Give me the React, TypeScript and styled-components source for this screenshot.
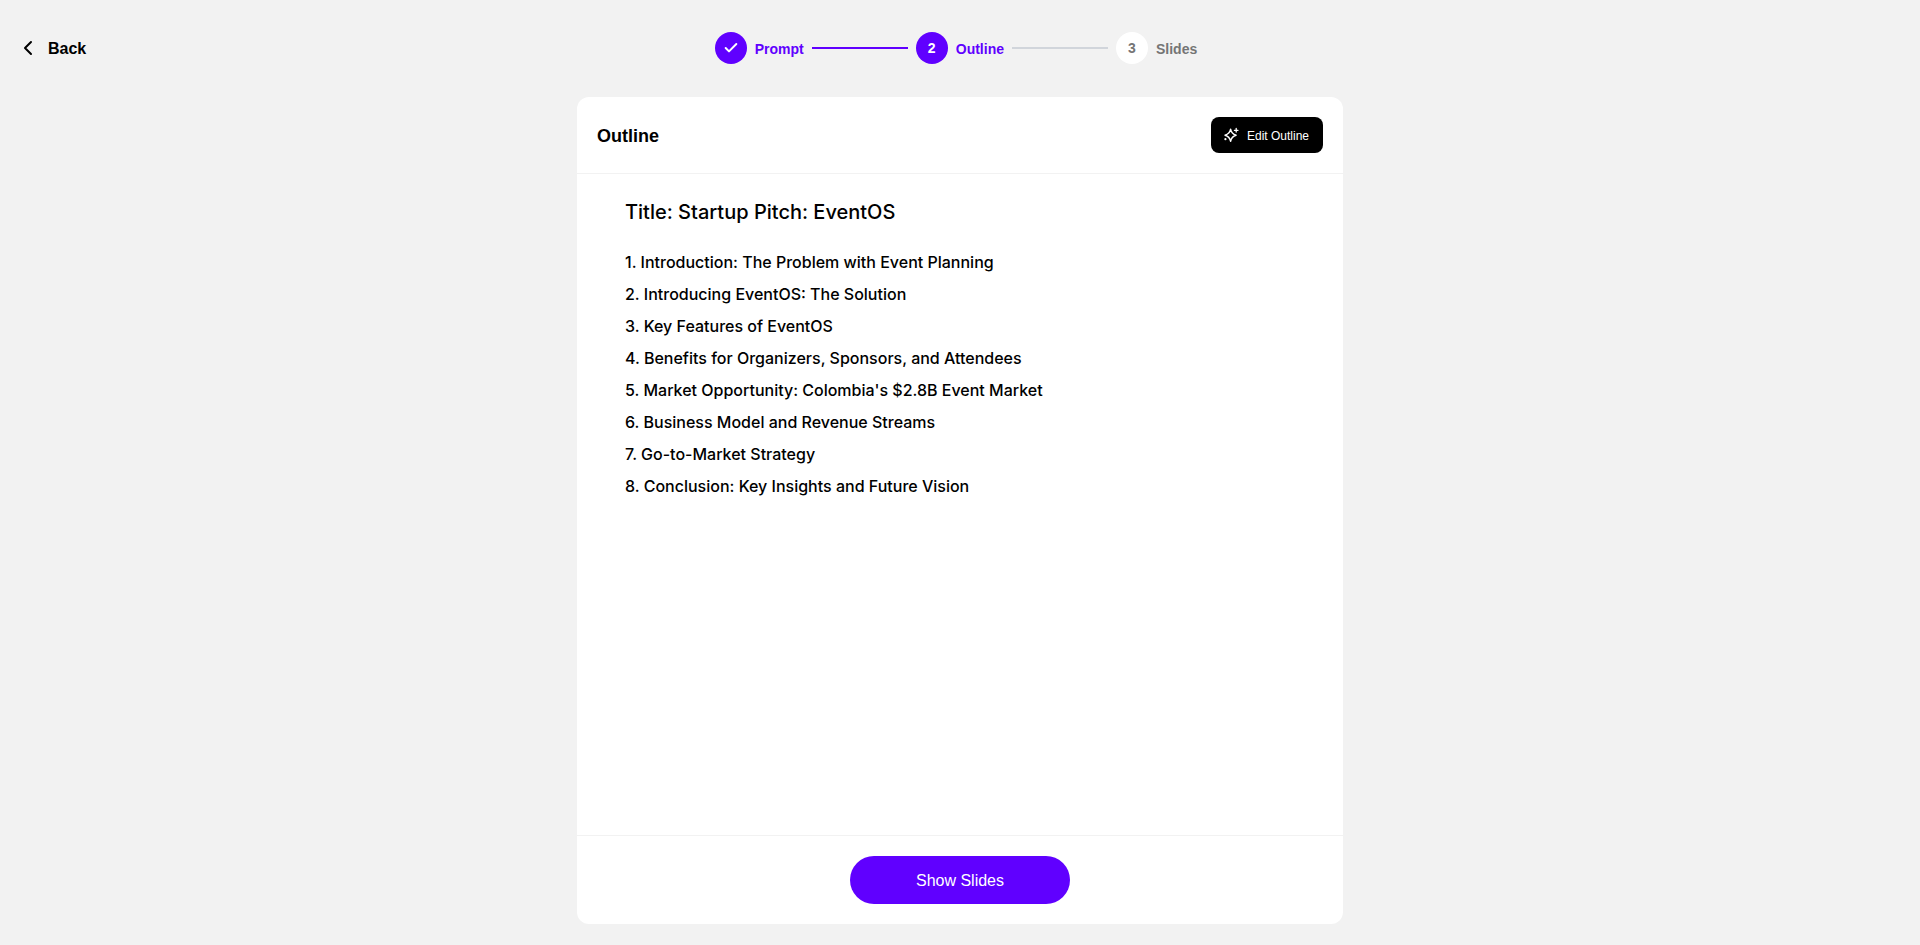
import React from "react";
import styled, { createGlobalStyle } from "styled-components";
import { Check, ChevronLeft } from "lucide-react";

const ACCENT = "#6000ff";
const SURFACE = "#f2f2f2";

const GlobalStyle = createGlobalStyle`
  *, *::before, *::after { box-sizing: border-box; }
  body {
    margin: 0;
    background: ${SURFACE};
    color: #000;
    font-family: "Liberation Sans", Arial, sans-serif;
  }
  button { font-family: inherit; border: 0; cursor: pointer; }
`;

const Page = styled.div`
  min-height: 100vh;
  display: flex;
  flex-direction: column;
  padding-bottom: 21px;
`;

const TopBar = styled.header`
  display: grid;
  grid-template-columns: 1fr auto 1fr;
  align-items: center;
  padding: 32px 16px 33px;
`;

const Label = styled.span`
  padding-top: 2px;
`;

const BackLink = styled.a`
  justify-self: start;
  display: flex;
  align-items: center;
  gap: 8px;
  color: #000;
  font-size: 16px;
  line-height: 24px;
  font-weight: 700;
  text-decoration: none;
`;

const Steps = styled.ol`
  display: flex;
  align-items: center;
  margin: 0;
  padding: 0;
  list-style: none;
`;

const Step = styled.li<{ $reached: boolean }>`
  display: flex;
  align-items: center;
  gap: 8px;
  padding-right: 8px;
  color: ${(p) => (p.$reached ? ACCENT : "#757575")};
  font-size: 14px;
  line-height: 20px;
  font-weight: 700;
`;

const StepBadge = styled.span<{ $reached: boolean }>`
  display: flex;
  align-items: center;
  justify-content: center;
  width: 32px;
  height: 32px;
  border-radius: 50%;
  background: ${(p) => (p.$reached ? ACCENT : "#fff")};
  color: ${(p) => (p.$reached ? "#fff" : "#757575")};
`;

const Connector = styled.span<{ $done: boolean }>`
  width: 96px;
  height: 2px;
  background: ${(p) => (p.$done ? ACCENT : "#d1d5db")};
`;

const Card = styled.main`
  flex: 1;
  display: flex;
  flex-direction: column;
  width: 100%;
  max-width: 766px;
  margin: 0 auto;
  background: #fff;
  border-radius: 12px;
`;

const CardHeader = styled.div`
  display: flex;
  align-items: center;
  justify-content: space-between;
  padding: 20px;
  border-bottom: 1px solid ${SURFACE};
`;

const CardTitle = styled.h1`
  margin: 0;
  padding-top: 2px;
  font-size: 18px;
  line-height: 28px;
  font-weight: 700;
`;

const EditButton = styled.button`
  display: flex;
  align-items: center;
  gap: 8px;
  min-width: 112px;
  height: 36px;
  padding: 0 12px;
  border-radius: 8px;
  background: #000;
  color: #fff;
  font-size: 12px;
  line-height: 16px;
`;

const OutlineBody = styled.section`
  flex: 1;
  padding: 24px 48px;
  font-family: Inter, sans-serif;
  font-weight: 500;
`;

const DeckTitle = styled.h2`
  margin: 0 0 20px;
  font-size: 20px;
  line-height: 28px;
  font-weight: 500;
`;

const OutlineList = styled.ol`
  margin: 0;
  padding: 0;
  list-style: none;
`;

const OutlineItem = styled.li`
  font-size: 16px;
  line-height: 32px;
`;

const CardFooter = styled.div`
  display: flex;
  justify-content: center;
  padding: 20px;
  border-top: 1px solid ${SURFACE};
`;

const ShowButton = styled.button`
  display: flex;
  align-items: center;
  justify-content: center;
  width: 220px;
  height: 48px;
  border-radius: 24px;
  background: ${ACCENT};
  color: #fff;
  font-size: 16px;
  line-height: 24px;
`;

function SparkleIcon() {
  return (
    <svg width="16" height="16" viewBox="0 0 16 16" fill="none" stroke="#fff" strokeLinecap="round" strokeLinejoin="round" aria-hidden>
      <path
        d="M7.6 2.2 C8.3 5.8 9.4 7.2 13.1 8.2 C9.4 9.2 8.3 10.7 7.6 14.3 C6.9 10.7 5.7 9.2 2 8.2 C5.7 7.2 6.9 5.8 7.6 2.2 Z"
        strokeWidth="1.4"
      />
      <path d="M13.2 1.5 V5.1 M11.4 3.3 H15" strokeWidth="1.3" />
      <circle cx="2.4" cy="12.2" r="1.1" fill="#fff" stroke="none" />
    </svg>
  );
}

const STEPS = ["Prompt", "Outline", "Slides"];
const CURRENT = 1;

const TOPICS = [
  "Introduction: The Problem with Event Planning",
  "Introducing EventOS: The Solution",
  "Key Features of EventOS",
  "Benefits for Organizers, Sponsors, and Attendees",
  "Market Opportunity: Colombia's $2.8B Event Market",
  "Business Model and Revenue Streams",
  "Go-to-Market Strategy",
  "Conclusion: Key Insights and Future Vision",
];

export default function App() {
  return (
    <Page>
      <GlobalStyle />
      <TopBar>
        <BackLink href="#back">
          <ChevronLeft size={24} aria-hidden />
          <Label>Back</Label>
        </BackLink>
        <Steps>
          {STEPS.map((name, i) => (
            <Step key={name} $reached={i <= CURRENT} aria-current={i === CURRENT ? "step" : undefined}>
              <StepBadge $reached={i <= CURRENT}>
                {i < CURRENT ? <Check size={16} strokeWidth={3} aria-hidden /> : i + 1}
              </StepBadge>
              <Label>{name}</Label>
              {i < STEPS.length - 1 && <Connector $done={i < CURRENT} />}
            </Step>
          ))}
        </Steps>
      </TopBar>
      <Card>
        <CardHeader>
          <CardTitle>Outline</CardTitle>
          <EditButton type="button">
            <SparkleIcon />
            <Label>Edit Outline</Label>
          </EditButton>
        </CardHeader>
        <OutlineBody>
          <DeckTitle>Title: Startup Pitch: EventOS</DeckTitle>
          <OutlineList>
            {TOPICS.map((topic, i) => (
              <OutlineItem key={topic}>
                {i + 1}. {topic}
              </OutlineItem>
            ))}
          </OutlineList>
        </OutlineBody>
        <CardFooter>
          <ShowButton type="button">
            <Label>Show Slides</Label>
          </ShowButton>
        </CardFooter>
      </Card>
    </Page>
  );
}
